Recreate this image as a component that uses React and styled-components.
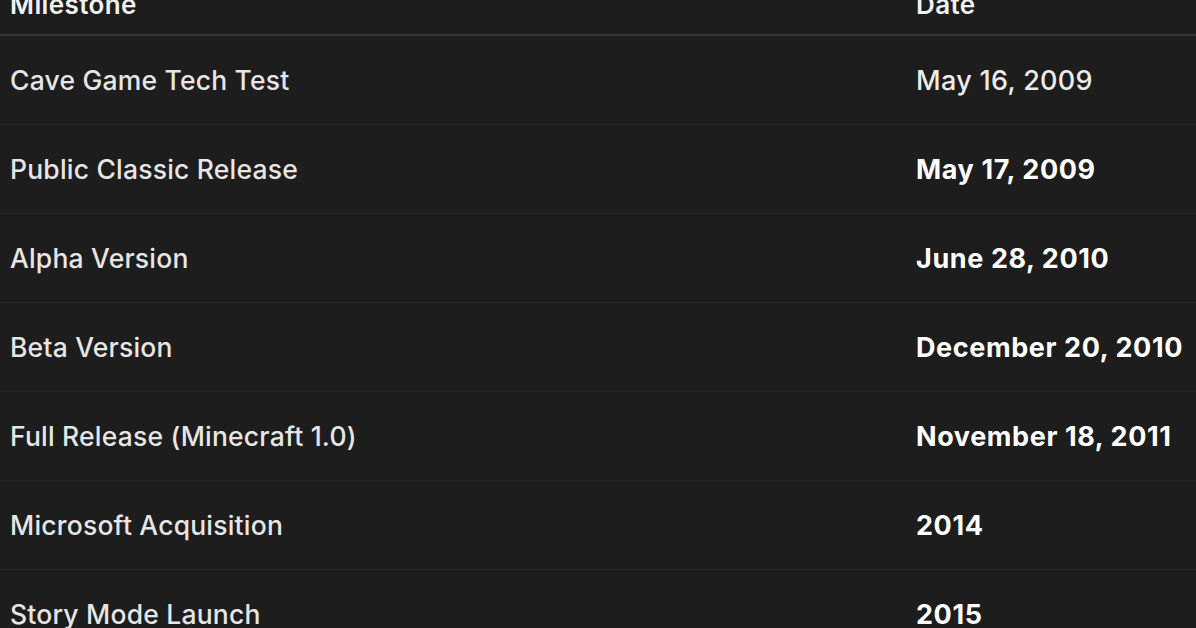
import styled, { createGlobalStyle } from "styled-components";

const GlobalStyle = createGlobalStyle`
  html, body {
    margin: 0;
    padding: 0;
    background: #1d1d1d;
    overflow: hidden;
  }
`;

const milestones = [
  { name: "Cave Game Tech Test", date: "May 16, 2009", strong: false },
  { name: "Public Classic Release", date: "May 17, 2009", strong: true },
  { name: "Alpha Version", date: "June 28, 2010", strong: true },
  { name: "Beta Version", date: "December 20, 2010", strong: true },
  { name: "Full Release (Minecraft 1.0)", date: "November 18, 2011", strong: true },
  { name: "Microsoft Acquisition", date: "2014", strong: true },
  { name: "Story Mode Launch", date: "2015", strong: true },
];

function App() {
  return (
    <Page>
      <GlobalStyle />
      <Table>
        <HeaderRow>
          <HeadCell>Milestone</HeadCell>
          <HeadCell>Date</HeadCell>
        </HeaderRow>
        {milestones.map((m) => (
          <Row key={m.name}>
            <NameCell>{m.name}</NameCell>
            <DateCell $strong={m.strong}>{m.date}</DateCell>
          </Row>
        ))}
      </Table>
    </Page>
  );
}

export default App;

const Page = styled.div`
  width: 1196px;
  height: 628px;
  overflow: hidden;
  background: #1d1d1d;
  font-family: Inter, "Liberation Sans", sans-serif;
`;

const Table = styled.div`
  display: flex;
  flex-direction: column;
  margin-top: -26px;
`;

const HeaderRow = styled.div`
  display: grid;
  grid-template-columns: 906px 1fr;
  align-items: center;
  height: 60px;
  padding-left: 10px;
  border-bottom: 2px solid #353535;
`;

const HeadCell = styled.div`
  font-size: 26px;
  font-weight: 600;
  letter-spacing: 0.4px;
  color: #f2f2f2;
`;

const Row = styled.div`
  display: grid;
  grid-template-columns: 906px 1fr;
  align-items: center;
  height: 88px;
  padding-left: 10px;
  border-bottom: 1px solid #252525;
`;

const NameCell = styled.div`
  font-size: 26.5px;
  font-weight: 550;
  letter-spacing: 0.2px;
  color: #e6e6e6;
`;

const DateCell = styled.div`
  font-size: 27px;
  letter-spacing: ${(p) => (p.$strong ? "0.6px" : "0.3px")};
  font-weight: ${(p) => (p.$strong ? 700 : 550)};
  color: ${(p) => (p.$strong ? "#ffffff" : "#ececec")};
`;
